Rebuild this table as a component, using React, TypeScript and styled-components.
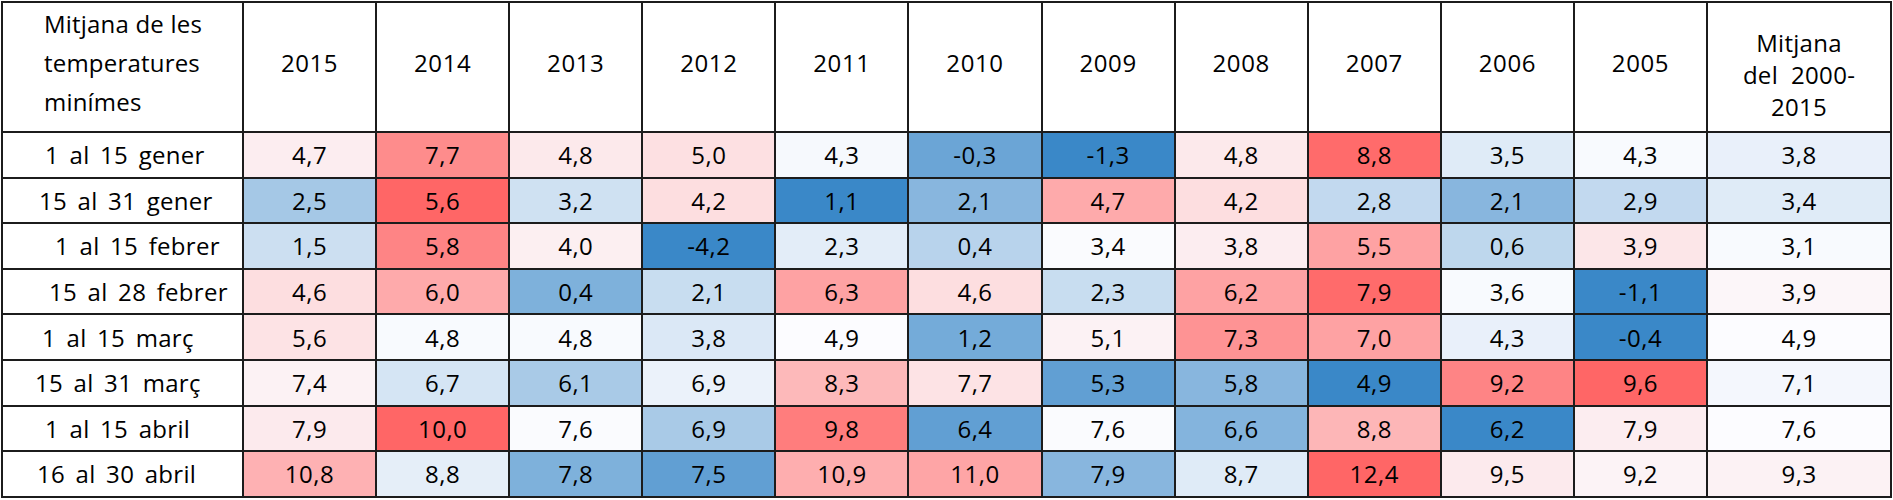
import styled, { createGlobalStyle } from 'styled-components';

const GlobalStyle = createGlobalStyle`
  body {
    margin: 0;
    background: #ffffff;
    font-family: 'Open Sans', 'Liberation Sans', sans-serif;
    color: #000000;
  }
`;

const years = ['2015', '2014', '2013', '2012', '2011', '2010', '2009', '2008', '2007', '2006', '2005'];

// each cell: [value, shade]; shade -1 = deep blue, 0 = white, 1 = deep red
type Cell = [string, number];

const rows: { label: string; indent: number; cells: Cell[] }[] = [
  {
    label: '1 al 15 gener',
    indent: 42,
    cells: [
      ['4,7', 0.1], ['7,7', 0.75], ['4,8', 0.13], ['5,0', 0.19], ['4,3', -0.03], ['-0,3', -0.75],
      ['-1,3', -1], ['4,8', 0.13], ['8,8', 0.97], ['3,5', -0.15], ['4,3', -0.02], ['3,8', -0.1],
    ],
  },
  {
    label: '15 al 31 gener',
    indent: 36,
    cells: [
      ['2,5', -0.45], ['5,6', 1], ['3,2', -0.23], ['4,2', 0.2], ['1,1', -1], ['2,1', -0.6],
      ['4,7', 0.55], ['4,2', 0.2], ['2,8', -0.3], ['2,1', -0.6], ['2,9', -0.3], ['3,4', -0.15],
    ],
  },
  {
    label: '1 al 15 febrer',
    indent: 52,
    cells: [
      ['1,5', -0.25], ['5,8', 0.8], ['4,0', 0.09], ['-4,2', -1], ['2,3', -0.13], ['0,4', -0.35],
      ['3,4', -0.01], ['3,8', 0.1], ['5,5', 0.6], ['0,6', -0.32], ['3,9', 0.15], ['3,1', -0.02],
    ],
  },
  {
    label: '15 al 28 febrer',
    indent: 46,
    cells: [
      ['4,6', 0.2], ['6,0', 0.55], ['0,4', -0.65], ['2,1', -0.27], ['6,3', 0.6], ['4,6', 0.2],
      ['2,3', -0.27], ['6,2', 0.6], ['7,9', 0.97], ['3,6', -0.02], ['-1,1', -1], ['3,9', 0.04],
    ],
  },
  {
    label: '1 al 15 març',
    indent: 39,
    cells: [
      ['5,6', 0.17], ['4,8', -0.02], ['4,8', -0.02], ['3,8', -0.17], ['4,9', 0], ['1,2', -0.7],
      ['5,1', 0.07], ['7,3', 0.7], ['7,0', 0.6], ['4,3', -0.1], ['-0,4', -1], ['4,9', 0],
    ],
  },
  {
    label: '15 al 31 març',
    indent: 32,
    cells: [
      ['7,4', 0.07], ['6,7', -0.2], ['6,1', -0.43], ['6,9', -0.09], ['8,3', 0.45], ['7,7', 0.17],
      ['5,3', -0.8], ['5,8', -0.6], ['4,9', -1], ['9,2', 0.8], ['9,6', 1], ['7,1', -0.04],
    ],
  },
  {
    label: '1 al 15 abril',
    indent: 42,
    cells: [
      ['7,9', 0.12], ['10,0', 1], ['7,6', -0.01], ['6,9', -0.43], ['9,8', 0.85], ['6,4', -0.8],
      ['7,6', -0.01], ['6,6', -0.62], ['8,8', 0.47], ['6,2', -1], ['7,9', 0.1], ['7,6', 0],
    ],
  },
  {
    label: '16 al 30 abril',
    indent: 34,
    cells: [
      ['10,8', 0.5], ['8,8', -0.12], ['7,8', -0.65], ['7,5', -0.8], ['10,9', 0.52], ['11,0', 0.58],
      ['7,9', -0.6], ['8,7', -0.15], ['12,4', 1], ['9,5', 0.12], ['9,2', 0.06], ['9,3', 0.07],
    ],
  },
];

const WHITE = [252, 252, 255];
const RED = [255, 102, 102];
const BLUE = [58, 136, 200];

const shade = (t: number) => {
  const end = t >= 0 ? RED : BLUE;
  const k = Math.min(1, Math.abs(t));
  const c = WHITE.map((w, i) => Math.round(w + (end[i] - w) * k));
  return `rgb(${c[0]}, ${c[1]}, ${c[2]})`;
};

export default function App() {
  return (
    <>
      <GlobalStyle />
      <Page>
        <Grid>
          <CornerHead>
            Mitjana de les
            <br />
            temperatures
            <br />
            minímes
          </CornerHead>
          {years.map((y) => (
            <YearHead key={y}>{y}</YearHead>
          ))}
          <AvgHead>
            Mitjana
            <br />
            del&nbsp; 2000-
            <br />
            2015
          </AvgHead>
          {rows.map((row) => (
            <Row key={row.label}>
              <RowLabel $indent={row.indent}>{row.label}</RowLabel>
              {row.cells.map(([v, t], i) => (
                <ValueCell key={i} $bg={shade(t)}>
                  {v}
                </ValueCell>
              ))}
            </Row>
          ))}
        </Grid>
      </Page>
    </>
  );
}

const Page = styled.div`
  padding: 1px;
`;

const Grid = styled.div`
  display: grid;
  grid-template-columns: 239px repeat(11, 131.1px) 182px;
  grid-template-rows: 128px repeat(8, 43.6px);
  gap: 2px;
  padding: 2px;
  width: fit-content;
  background: #1c1c1c;
  font-size: 24px;
`;

const Row = styled.div`
  display: contents;
`;

const HeadBase = styled.div`
  background: #ffffff;
  display: flex;
`;

const CornerHead = styled(HeadBase)`
  flex-direction: column;
  padding: 1px 0 0 41px;
  line-height: 39px;
  letter-spacing: 0.2px;
`;

const YearHead = styled(HeadBase)`
  align-items: center;
  justify-content: center;
  padding-bottom: 9px;
  letter-spacing: 0.6px;
`;

const AvgHead = styled(HeadBase)`
  flex-direction: column;
  align-items: center;
  text-align: center;
  padding-top: 24px;
  line-height: 32px;
  letter-spacing: 0.3px;
`;

const RowLabel = styled.div<{ $indent: number }>`
  background: #ffffff;
  display: flex;
  align-items: center;
  padding-left: ${({ $indent }) => $indent}px;
  white-space: nowrap;
  word-spacing: 4px;
  letter-spacing: 0.3px;
`;

const ValueCell = styled.div<{ $bg: string }>`
  background: ${({ $bg }) => $bg};
  display: flex;
  align-items: center;
  justify-content: center;
  letter-spacing: 0.5px;
`;
